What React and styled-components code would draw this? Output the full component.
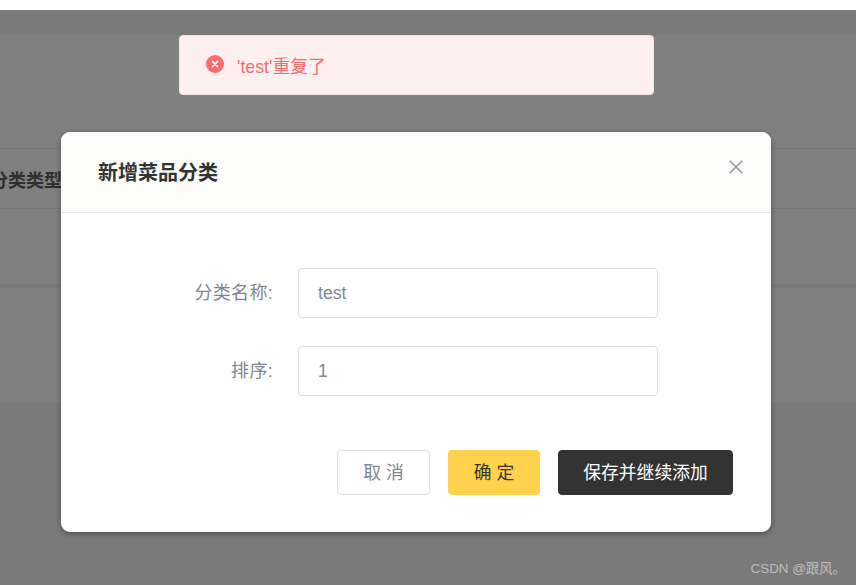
import React from 'react';
import styled, { createGlobalStyle } from 'styled-components';

const fontStack = `"Liberation Sans", "Noto Sans CJK SC", sans-serif`;

const GlobalStyle = createGlobalStyle`
  html, body {
    margin: 0;
    padding: 0;
    height: 100%;
    background: #fff;
    overflow: hidden;
  }
  * {
    box-sizing: border-box;
  }
`;

const Page = styled.div`
  position: relative;
  width: 856px;
  height: 585px;
  padding-top: 10px;
  font-family: ${fontStack};
  overflow: hidden;
`;

const Backdrop = styled.div`
  height: 575px;
  padding-top: 25px;
  background: #7a7a7b;
`;

const Panel = styled.div`
  display: flex;
  flex-direction: column;
  height: 367px;
  padding-top: 113px;
  background: #808080;
`;

const HeaderRow = styled.div`
  display: flex;
  align-items: center;
  height: 61px;
  border-top: 1px solid #777;
  border-bottom: 1px solid #777;
`;

const HeaderCell = styled.span`
  margin-left: -10px;
  font-size: 18px;
  font-weight: 700;
  color: #2f2f2f;
`;

const BodyRow = styled.div`
  height: 79px;
  border-bottom: 4px solid #787878;
`;

const Message = styled.div`
  position: absolute;
  top: 35px;
  left: 178.5px;
  display: flex;
  align-items: center;
  gap: 13px;
  width: 475px;
  height: 60px;
  padding-left: 26.5px;
  background: #fef0f0;
  border: 1px solid #fde2e2;
  border-radius: 4px;
  color: #f56c6c;
  font-size: 17.8px;
`;

const MessageText = styled.span`
  font-weight: 400;
`;

const MessageIcon = styled.svg`
  display: block;
  width: 18px;
  height: 18px;
  margin-top: -3px;
`;

const Dialog = styled.div`
  position: absolute;
  top: 132px;
  left: 61px;
  display: flex;
  flex-direction: column;
  width: 710px;
  height: 400px;
  background: #fff;
  border-radius: 9px;
  box-shadow: 0 2px 6px rgba(0, 0, 0, 0.35);
  overflow: hidden;
`;

const DialogHeader = styled.div`
  display: flex;
  align-items: center;
  justify-content: space-between;
  height: 81px;
  padding: 0 28.5px 0 37px;
  background: #fbfbf9;
  border-bottom: 1px solid #e4e4e4;
`;

const DialogTitle = styled.h2`
  margin: 0 0 1px;
  font-size: 20px;
  font-weight: 700;
  color: #333;
`;

const CloseIcon = styled.svg`
  display: block;
  width: 14px;
  height: 14px;
  margin-top: -11px;
`;

const Form = styled.div`
  display: flex;
  flex-direction: column;
  gap: 28px;
  padding: 55px 0 0 0;
`;

const Field = styled.div`
  display: flex;
  align-items: center;
  height: 50px;
`;

const Label = styled.label`
  width: 212px;
  margin-bottom: 4px;
  text-align: right;
  font-size: 18px;
  letter-spacing: 0.3px;
  color: #818693;
`;

const Input = styled.input`
  width: 360px;
  height: 50px;
  margin-left: 25px;
  padding: 0 19px;
  background: #fff;
  border: 1px solid #dcdfe6;
  border-radius: 4px;
  outline: none;
  font-family: ${fontStack};
  font-size: 17.6px;
  color: #7f8694;
`;

const Footer = styled.div`
  display: flex;
  justify-content: flex-end;
  gap: 18px;
  padding: 54px 38px 0 0;
`;

const Button = styled.button`
  width: ${(p) => p.$width}px;
  height: 45px;
  padding: 0 0 4px;
  background: ${(p) => p.$bg};
  border: 1px solid ${(p) => p.$line};
  border-radius: 4px;
  color: ${(p) => p.$color};
  font-family: ${fontStack};
  font-size: 17.8px;
`;

const Watermark = styled.div`
  position: absolute;
  right: 10px;
  bottom: 8px;
  font-size: 13.4px;
  color: #bdbdbd;
`;

const App = () => (
  <>
    <GlobalStyle />
    <Page>
      <Backdrop>
        <Panel>
          <HeaderRow>
            <HeaderCell>分类类型</HeaderCell>
          </HeaderRow>
          <BodyRow />
        </Panel>
      </Backdrop>

      <Message>
        <MessageIcon viewBox="0 0 18 18">
          <circle cx="9" cy="9" r="9" fill="#fb6b6c" />
          <path d="M6.4 6.4l5.2 5.2M11.6 6.4l-5.2 5.2" stroke="#fff" strokeWidth="1.5" strokeLinecap="round" />
        </MessageIcon>
        <MessageText>'test'重复了</MessageText>
      </Message>

      <Dialog>
        <DialogHeader>
          <DialogTitle>新增菜品分类</DialogTitle>
          <CloseIcon viewBox="0 0 14 14">
            <path d="M0.7 0.7l12.6 12.6M13.3 0.7L0.7 13.3" stroke="#909399" strokeWidth="1.4" fill="none" />
          </CloseIcon>
        </DialogHeader>
        <Form>
          <Field>
            <Label>分类名称:</Label>
            <Input readOnly value="test" />
          </Field>
          <Field>
            <Label>排序:</Label>
            <Input readOnly value="1" />
          </Field>
        </Form>
        <Footer>
          <Button $width={93} $bg="#fff" $line="#dcdfe6" $color="#818693">取 消</Button>
          <Button $width={92} $bg="#ffd24d" $line="#ffd24d" $color="#333">确 定</Button>
          <Button $width={175} $bg="#333" $line="#333" $color="#fff">保存并继续添加</Button>
        </Footer>
      </Dialog>

      <Watermark>CSDN @跟风。</Watermark>
    </Page>
  </>
);

export default App;
